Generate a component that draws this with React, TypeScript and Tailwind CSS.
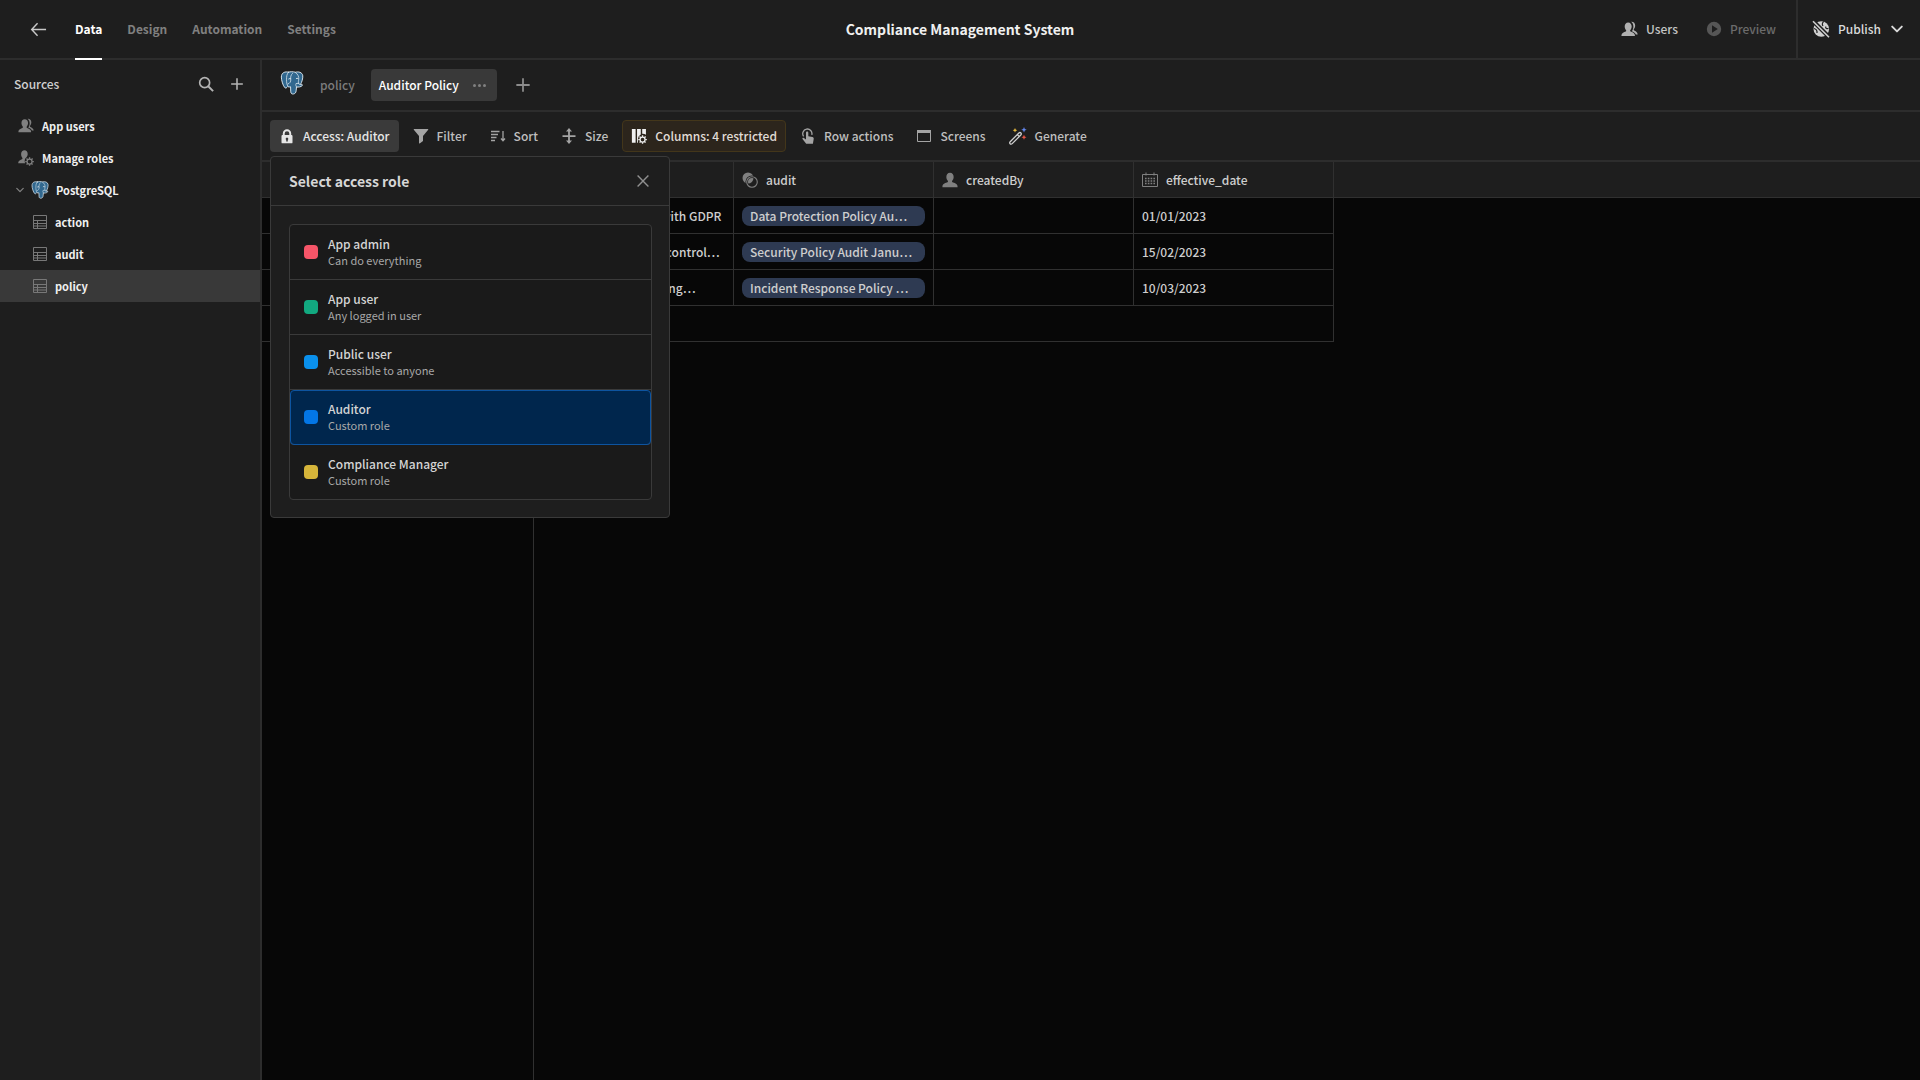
import { ReactNode, useState } from "react";
import clsx from "clsx";

interface IconProps {
  className?: string;
}

interface Role {
  name: string;
  description: string;
  color: string;
}

interface PolicyRow {
  description: string;
  audit: string;
  effectiveDate: string;
}

const roles: Role[] = [
  { name: "App admin", description: "Can do everything", color: "bg-[#f65568]" },
  { name: "App user", description: "Any logged in user", color: "bg-[#12a980]" },
  { name: "Public user", description: "Accessible to anyone", color: "bg-[#0a90ec]" },
  { name: "Auditor", description: "Custom role", color: "bg-[#0376e6]" },
  { name: "Compliance Manager", description: "Custom role", color: "bg-[#d6b53a]" },
];

const rows: PolicyRow[] = [
  {
    description: "Ensured compliance with GDPR",
    audit: "Data Protection Policy Au…",
    effectiveDate: "01/01/2023",
  },
  {
    description: "Defines all the access control…",
    audit: "Security Policy Audit Janu…",
    effectiveDate: "15/02/2023",
  },
  {
    description: "Procedures for reporting…",
    audit: "Incident Response Policy …",
    effectiveDate: "10/03/2023",
  },
];

const tables = ["action", "audit", "policy"];

const ArrowLeft = ({ className }: IconProps) => (
  <svg className={className} viewBox="0 0 18 18" fill="none" stroke="currentColor" strokeWidth="1.5">
    <path d="M17 9H2M8 2.5 1.8 9 8 15.5" />
  </svg>
);

const UsersIcon = ({ className }: IconProps) => (
  <svg className={className} viewBox="0 0 18 18" fill="currentColor">
    <path d="M7.6 1.5c2.3 0 3.7 1.8 3.7 4.2 0 1.6-.7 3-1.4 3.9-.3.4-.3 1.3.3 1.6 1.700.8 4.300 1.500 4.500 3.700v1.100H.5v-1.100c.2-2.200 2.800-2.900 4.500-3.700.6-.3.6-1.200.3-1.600-.7-.9-1.400-2.300-1.400-3.900 0-2.400 1.400-4.200 3.700-4.200z" />
    <path d="M10.800.8c2.300-.3 4.200 1.300 4.200 3.900 0 1.800-.7 3-1.400 3.900-.3.5-.1 1.200.4 1.500 1.300.7 3.300 1.500 3.600 3.700v.4h-1.900c-.7-2-2.700-2.600-4.200-3.400 1-1.300 1.600-3 1.600-4.900 0-2-.7-3.900-2.300-5.100z" />
  </svg>
);

const UserIcon = ({ className }: IconProps) => (
  <svg className={className} viewBox="0 0 18 18" fill="currentColor">
    <path d="M9 .8c2.600 0 4.100 2 4.100 4.700 0 1.800-.8 3.400-1.600 4.300-.4.5-.3 1.500.3 1.800 1.900.8 5.400 1.500 5.700 4.300v1.300H.5v-1.300c.3-2.800 3.800-3.500 5.700-4.300.6-.3.7-1.300.3-1.800-.8-.9-1.600-2.500-1.600-4.300C4.900 2.800 6.400.8 9 .8z" />
  </svg>
);

const GearIcon = () => (
  <>
    <circle cx="13" cy="13" r="2.800" fill="none" stroke="currentColor" strokeWidth="1.400" />
    <path
      d="M13 8.200v1.800M13 16v1.800M8.200 13H10M16 13h1.800M9.600 9.600l1.300 1.300M15.100 15.100l1.300 1.300M9.600 16.400l1.300-1.300M15.100 10.900l1.300-1.300"
      stroke="currentColor"
      strokeWidth="1.500"
    />
  </>
);

const UserGearIcon = ({ className }: IconProps) => (
  <svg className={className} viewBox="0 0 18 18" fill="currentColor">
    <path d="M7.300.3c2.200 0 3.600 1.700 3.600 4.200 0 1.500-.6 2.700-1.300 3.600l-1.200 1.300c-.9 1.600-1.200 3.500-.4 5.600H.3v-1c.2-2.300 2.500-2.900 4.200-3.700.6-.3.7-1.200.3-1.600-.7-.9-1.300-2.400-1.300-4.200C3.500 2 5.100.3 7.300.3z" />
    <GearIcon />
  </svg>
);

const SearchIcon = ({ className }: IconProps) => (
  <svg className={className} viewBox="0 0 18 18" fill="none" stroke="currentColor" strokeWidth="1.900">
    <circle cx="7.500" cy="7.500" r="5.600" />
    <path d="m11.500 11.500 5.500 5.500" strokeWidth="2.200" />
  </svg>
);

const PlusIcon = ({ className }: IconProps) => (
  <svg className={className} viewBox="0 0 18 18" stroke="currentColor" strokeWidth="2">
    <path d="M9 1.500v15M1.500 9h15" />
  </svg>
);

const CrossIcon = ({ className }: IconProps) => (
  <svg className={className} viewBox="0 0 12 12" stroke="currentColor" strokeWidth="1.400">
    <path d="m.6.6 10.800 10.800M11.400.6.6 11.400" />
  </svg>
);

const ChevronDown = ({ className }: IconProps) => (
  <svg
    className={className}
    viewBox="0 0 10 10"
    fill="none"
    stroke="currentColor"
    strokeWidth="1.600"
    strokeLinecap="round"
    strokeLinejoin="round"
  >
    <path d="m1 3 4 4 4-4" />
  </svg>
);

const TableIcon = ({ className }: IconProps) => (
  <svg className={className} viewBox="0 0 14 14" fill="none" stroke="currentColor">
    <path d="M.5.5h13v13H.5zM.5 5.500h13M.5 8.500h13M.5 11h13M4.500 5.500v8" />
  </svg>
);

const PostgresLogo = ({ className }: IconProps) => (
  <svg className={className} viewBox="0 0 24 25" strokeLinecap="round" strokeLinejoin="round">
    <path
      d="M8.200 1.200C5 .3 1 1.400.9 6.300c0 3.200 1.800 9.300 3.700 11.100 1 .9 2-.1 3-1.300.8.700 1.900.6 2.900.3l.2 5.300c.2 1.900 1.300 2.500 2.900 2.200 1.900-.4 2.500-1.500 2.700-3.300l.4-4c1.600.2 4.600.3 6-1.500.7-1-.5-1.100-1.900-1 1.500-2.600 2.700-6.500 2.400-9.100C22.800 1.200 18.500.4 15.500 1.300c-2.300-.7-5-.7-7.300-.1z"
      fill="#31688f"
      stroke="#dce8ef"
      strokeWidth="1"
    />
    <path
      d="M8.200 1.400C6.500 3.500 6.300 6 6.300 8.500c0 3 .1 5.700 1.500 7.500M15.500 1.500c2.700 1.700 3.900 4.500 3.500 7.300-.2 1.500-.7 3 0 4.600l1.300.7M12.500 2.500C10.600 4 10.400 6.500 10.700 9c.2 2-.8 3.800-2.900 4.500M17 16.800c-1-1-1.300-2.300-.8-3.700l2.800-.3"
      fill="none"
      stroke="#dce8ef"
      strokeWidth=".8"
    />
    <path d="M8.700 8.200c.6-.4 1.300-.4 1.800 0M16.500 7.900c.5-.4 1.200-.4 1.700 0" fill="none" stroke="#fff" />
  </svg>
);

const LockIcon = ({ className }: IconProps) => (
  <svg className={className} viewBox="0 0 16 16" fill="currentColor">
    <path
      fillRule="evenodd"
      d="M3.800 7V5.500a4.200 4.200 0 0 1 8.400 0V7h.4c.5 0 .9.4.9.9v6.500c0 .5-.4.900-.9.900H3.400c-.5 0-.9-.4-.9-.9V7.900c0-.5.4-.9.9-.9zm1.900 0h4.600V5.500a2.300 2.300 0 0 0-4.600 0zm1.500 4.900v1.500h1.600v-1.500a1.300 1.300 0 1 0-1.600 0z"
    />
  </svg>
);

const FilterIcon = ({ className }: IconProps) => (
  <svg className={className} viewBox="0 0 16 16" fill="currentColor">
    <path d="M1.200 1h13.600c.4 0 .6.500.4.800L10 8v4.900l-3.300 2.600c-.3.200-.7 0-.7-.4V8L.8 1.800C.6 1.500.8 1 1.200 1z" />
  </svg>
);

const SortIcon = ({ className }: IconProps) => (
  <svg className={className} viewBox="0 0 16 16" fill="none" stroke="currentColor" strokeWidth="1.500">
    <path d="M1 3.500h8.500M1 6.500h7M1 9.500h5.500M1 12.500h4" />
    <path d="M13 3v9.500M11 10.500l2 2.200 2-2.200" strokeWidth="1.300" />
  </svg>
);

const SizeIcon = ({ className }: IconProps) => (
  <svg className={className} viewBox="0 0 16 16" fill="currentColor">
    <path d="M1.500 7.200h13v1.700h-13zM8 0l3 3.500H8.900v3.700H7.100V3.500H5zM8 16l3-3.500H8.900V8.900H7.100v3.600H5z" />
  </svg>
);

const ColumnsIcon = ({ className }: IconProps) => (
  <svg className={className} viewBox="0 0 18 18" fill="currentColor">
    <path d="M1 1h4.200v15.500H1zM6.800 1H11v6.300a6 6 0 0 0-3.200 5v4.200h-1zM12.600 1h4.200v6.700a6 6 0 0 0-4.200-1.200z" />
    <GearIcon />
  </svg>
);

const TapIcon = ({ className }: IconProps) => (
  <svg className={className} viewBox="0 0 16 16" fill="currentColor">
    <path
      d="M3.600 8.300a4.600 4.600 0 1 1 8.200-1.500"
      fill="none"
      stroke="currentColor"
      strokeWidth="1.300"
    />
    <path d="M6 4.700c0-1.600 2.300-1.600 2.300 0v3.600l4.100.8c1 .2 1.500.9 1.300 1.900l-.8 4.700H6.200L2.500 11c-.5-.8.5-1.700 1.400-1L6 11.500z" />
  </svg>
);

const ScreenIcon = ({ className }: IconProps) => (
  <svg className={className} viewBox="0 0 16 16">
    <path d="M1.500 2.500h13v11h-13z" fill="none" stroke="currentColor" />
    <path d="M1 2h14v3H1z" fill="currentColor" />
  </svg>
);

const WandIcon = ({ className }: IconProps) => (
  <svg className={className} viewBox="0 0 18 18">
    <path
      d="m1.200 14.700 8.700-8.700c.7-.7 1.400-.7 2 0s.6 1.400-.1 2l-8.600 8.600c-.7.700-1.500.7-2.100.1s-.6-1.300.1-2zM8.300 7.600l2 2"
      fill="none"
      stroke="#d0d0d0"
      strokeWidth="1.300"
    />
    <path d="m6 1 .7 1.600 1.600.7-1.600.7L6 5.600 5.300 4l-1.600-.7 1.600-.7z" fill="#e6b93f" />
    <path d="m15 0 .8 1.900 1.900.8-1.900.8L15 5.400l-.8-1.900-1.900-.8 1.900-.8z" fill="#6487ee" />
    <path d="m15 7.800.8 1.700 1.700.8-1.700.8-.8 1.700-.8-1.700-1.700-.8 1.700-.8z" fill="#e35445" />
  </svg>
);

const RelationshipIcon = ({ className }: IconProps) => (
  <svg className={className} viewBox="0 0 16 16">
    <circle cx="6" cy="6" r="5.500" fill="currentColor" />
    <circle cx="10" cy="10" r="5.300" fill="none" stroke="#1e1e1e" strokeWidth="2.600" />
    <circle cx="10" cy="10" r="5.300" fill="none" stroke="currentColor" strokeWidth="1.100" />
  </svg>
);

const CalendarIcon = ({ className }: IconProps) => (
  <svg className={className} viewBox="0 0 16 16" fill="none" stroke="currentColor">
    <path d="M.5 2.500h15v12H.5zM4 .5v3M12 .5v3" />
    <path d="M3 6.500h10M3 9h10M3 11.500h10" strokeWidth="1.500" strokeDasharray="1.600 1.200" />
  </svg>
);

const PlayIcon = ({ className }: IconProps) => (
  <svg className={className} viewBox="0 0 16 16" fill="currentColor">
    <path fillRule="evenodd" d="M8 .8a7.200 7.200 0 1 0 0 14.400A7.200 7.200 0 0 0 8 .8zM6 4.300 11.800 8 6 11.700z" />
  </svg>
);

const GlobeStrikeIcon = ({ className }: IconProps) => (
  <svg className={className} viewBox="0 0 18 18">
    <circle cx="9.300" cy="9" r="7.800" fill="currentColor" />
    <path
      d="M11.800 1.500c-1.800 1.300-1.800 3.200-.8 4.500M2 8.500c2 .5 3.300 2 3 4.500M14 6.500c-1 1.500.5 2.500 2.500 2"
      fill="none"
      stroke="#1e1e1e"
      strokeWidth="1.200"
    />
    <path d="m.5.500 17.500 17.500" stroke="#1e1e1e" strokeWidth="4.200" />
    <path d="M1 1.200 17 17.200" stroke="currentColor" strokeWidth="1.600" />
  </svg>
);

interface ToolButtonProps {
  icon: ReactNode;
  label: string;
  variant?: "quiet" | "active" | "warning";
  onClick?: () => void;
}

function ToolButton({ icon, label, variant = "quiet", onClick }: ToolButtonProps) {
  return (
    <button
      type="button"
      onClick={onClick}
      className={clsx(
        "flex h-8 items-center gap-2 whitespace-nowrap rounded border px-2",
        variant === "quiet" && "border-transparent text-[#bebebe]",
        variant === "active" && "border-transparent bg-[#3a3a3a] text-[#e6e6e6]",
        variant === "warning" && "border-[#43361a] bg-[#2c251c] text-[#e0dcd6]"
      )}
    >
      {icon}
      {label}
    </button>
  );
}

function TopBar() {
  return (
    <header className="grid h-[60px] shrink-0 grid-cols-[1fr_auto_1fr] border-b-2 border-[#2d2d2d]">
      <div className="flex items-center">
        <button type="button" aria-label="Back" className="ml-[30px] mr-7">
          <ArrowLeft className="size-[17px] text-[#c8c8c8]" />
        </button>
        <nav className="-mb-[2px] flex gap-[25px] self-stretch font-bold text-[#808080]">
          <a href="#data" className="flex items-center border-b-2 border-white text-white">
            Data
          </a>
          <a href="#design" className="flex items-center border-b-2 border-transparent">
            Design
          </a>
          <a href="#automation" className="flex items-center border-b-2 border-transparent">
            Automation
          </a>
          <a href="#settings" className="flex items-center border-b-2 border-transparent">
            Settings
          </a>
        </nav>
      </div>
      <h1 className="flex items-center text-sm font-bold text-[#f0f0f0]">Compliance Management System</h1>
      <div className="flex items-center justify-end">
        <button type="button" className="flex items-center gap-2 text-[#c4c4c4]">
          <UsersIcon className="size-[17px] text-[#b0b0b0]" />
          Users
        </button>
        <button type="button" disabled className="ml-7 mr-5 flex items-center gap-2 text-[#6b6b6b]">
          <PlayIcon className="size-4 text-[#565656]" />
          Preview
        </button>
        <button
          type="button"
          className="flex items-center gap-2 self-stretch border-l-2 border-[#2d2d2d] pl-[14px] pr-[17px] text-[#dadada]"
        >
          <GlobeStrikeIcon className="size-[18px] text-[#d0d0d0]" />
          Publish
          <ChevronDown className="ml-0.5 size-3" />
        </button>
      </div>
    </header>
  );
}

function Sidebar() {
  return (
    <aside className="flex w-[262px] shrink-0 flex-col border-r-2 border-[#2d2d2d]">
      <div className="flex h-[50px] items-center pb-[2px] pl-[14px] pr-4 text-[#cfcfcf]">
        <h2 className="flex-1 font-medium">Sources</h2>
        <button type="button" aria-label="Search sources" className="mr-4">
          <SearchIcon className="size-4 text-[#b4b4b4]" />
        </button>
        <button type="button" aria-label="Add source">
          <PlusIcon className="size-[14px] text-[#b4b4b4]" />
        </button>
      </div>
      <nav className="flex flex-col text-[11px] font-bold text-[#f0f0f0]">
        <a href="#users" className="flex h-8 items-center gap-2 pl-[18px]">
          <UsersIcon className="size-4 text-[#808080]" />
          App users
        </a>
        <a href="#roles" className="flex h-8 items-center gap-2 pl-[18px]">
          <UserGearIcon className="size-4 text-[#808080]" />
          Manage roles
        </a>
        <a href="#postgres" className="flex h-8 items-center gap-[7px] pl-4">
          <ChevronDown className="size-2 text-[#808080]" />
          <PostgresLogo className="size-[18px]" />
          PostgreSQL
        </a>
        {tables.map((table) => (
          <a
            key={table}
            href={`#${table}`}
            className={clsx("flex h-8 items-center gap-2 pl-[33px]", table === "policy" && "bg-[#393939]")}
          >
            <TableIcon className="size-[14px] text-[#787878]" />
            {table}
          </a>
        ))}
      </nav>
    </aside>
  );
}

function ViewTabs() {
  return (
    <div className="flex h-[52px] items-center border-b-2 border-[#2d2d2d] pl-[18px]">
      <PostgresLogo className="mb-1 size-6" />
      <a href="#policy" className="px-4 text-[#7c7c7c]">
        policy
      </a>
      <div className="flex h-8 items-center gap-[14px] rounded bg-[#393939] pl-2 pr-[11px] text-white">
        <a href="#auditor-policy">Auditor Policy</a>
        <button type="button" aria-label="View options" className="flex gap-[2px]">
          <span className="size-[3px] rounded-full bg-[#808080]" />
          <span className="size-[3px] rounded-full bg-[#808080]" />
          <span className="size-[3px] rounded-full bg-[#808080]" />
        </button>
      </div>
      <button type="button" aria-label="Add view" className="ml-[18px]">
        <PlusIcon className="size-4 text-[#8c8c8c]" />
      </button>
    </div>
  );
}

interface AccessPopoverProps {
  selected: string;
  onSelect: (name: string) => void;
  onClose: () => void;
}

function AccessPopover({ selected, onSelect, onClose }: AccessPopoverProps) {
  return (
    <div
      role="dialog"
      aria-label="Select access role"
      className="absolute left-0 top-full z-10 mt-1 w-[400px] rounded border border-[#3a3a3a] bg-[#1e1e1e]"
    >
      <div className="flex h-[49px] items-center justify-between border-b border-[#3a3a3a] pl-[18px] pr-5">
        <h2 className="text-sm font-bold text-[#d6d6d6]">Select access role</h2>
        <button type="button" aria-label="Close" onClick={onClose}>
          <CrossIcon className="size-3 text-[#909090]" />
        </button>
      </div>
      <div className="pb-[17px] pl-[18px] pr-[17px] pt-[18px]">
        <div className="divide-y divide-[#3a3a3a] rounded border border-[#3a3a3a] bg-[#1a1a1a]">
          {roles.map((role) => (
            <button
              key={role.name}
              type="button"
              onClick={() => onSelect(role.name)}
              className={clsx(
                "flex h-[55px] w-full items-center gap-[10px] px-[14px] text-left last:h-[54px]",
                role.name === selected && "rounded bg-[#00264d] outline -outline-offset-1 outline-[#0d54a0]"
              )}
            >
              <span className={clsx("size-[14px] rounded", role.color)} />
              <span className="flex flex-col">
                <span className="leading-4 text-[#d4d4d4]">{role.name}</span>
                <span className="text-[11px] font-normal leading-4 text-[#a8a8a8]">{role.description}</span>
              </span>
            </button>
          ))}
        </div>
      </div>
    </div>
  );
}

function Toolbar() {
  const [open, setOpen] = useState(true);
  const [role, setRole] = useState("Auditor");

  return (
    <div className="flex h-[50px] items-center gap-[5px] border-b-2 border-[#2d2d2d] px-2">
      <div className="relative">
        <ToolButton
          icon={<LockIcon className="size-4" />}
          label={`Access: ${role}`}
          variant="active"
          onClick={() => setOpen(!open)}
        />
        {open && <AccessPopover selected={role} onSelect={setRole} onClose={() => setOpen(false)} />}
      </div>
      <ToolButton icon={<FilterIcon className="size-4 text-[#a4a4a4]" />} label="Filter" />
      <ToolButton icon={<SortIcon className="size-4 text-[#a4a4a4]" />} label="Sort" />
      <ToolButton icon={<SizeIcon className="size-4 text-[#a4a4a4]" />} label="Size" />
      <ToolButton icon={<ColumnsIcon className="size-4 text-[#f0f0f0]" />} label="Columns: 4 restricted" variant="warning" />
      <ToolButton icon={<TapIcon className="size-4 text-[#a4a4a4]" />} label="Row actions" />
      <ToolButton icon={<ScreenIcon className="size-4 text-[#a4a4a4]" />} label="Screens" />
      <ToolButton icon={<WandIcon className="size-[18px]" />} label="Generate" />
    </div>
  );
}

function PolicyGrid() {
  const headCell = "h-9 border-b border-r border-[#303030] bg-[#1e1e1e] px-2 text-left font-medium";
  const cell = "h-9 truncate border-b border-r border-[#303030] px-2";

  return (
    <div className="flex flex-1 flex-col bg-[#070707] text-[#cecece]">
      <table className="w-full table-fixed border-separate border-spacing-0">
        <colgroup>
          <col className="w-[272px]" />
          <col className="w-[200px]" />
          <col className="w-[200px]" />
          <col className="w-[200px]" />
          <col className="w-[200px]" />
          <col />
        </colgroup>
        <thead>
          <tr>
            <th className={headCell} />
            <th className={headCell} />
            <th className={headCell}>
              <span className="flex items-center gap-2">
                <RelationshipIcon className="size-4 text-[#808080]" />
                audit
              </span>
            </th>
            <th className={headCell}>
              <span className="flex items-center gap-2">
                <UserIcon className="size-4 text-[#808080]" />
                createdBy
              </span>
            </th>
            <th className={headCell}>
              <span className="flex items-center gap-2">
                <CalendarIcon className="size-4 text-[#808080]" />
                effective_date
              </span>
            </th>
            <td className="border-b border-[#303030] bg-[#1e1e1e]" />
          </tr>
        </thead>
        <tbody>
          {rows.map((row) => (
            <tr key={row.audit}>
              <td className={cell} />
              <td className={cell}>{row.description}</td>
              <td className={cell}>
                <span className="block truncate rounded-lg bg-[#2e3a52] px-2 leading-5">{row.audit}</span>
              </td>
              <td className={cell} />
              <td className={cell}>{row.effectiveDate}</td>
              <td />
            </tr>
          ))}
          <tr>
            <td className={cell} />
            <td colSpan={4} className={cell} />
            <td />
          </tr>
        </tbody>
      </table>
      <div className="w-[272px] flex-1 border-r border-[#303030]" />
    </div>
  );
}

export default function App() {
  return (
    <div className="flex min-h-screen flex-col bg-[#1e1e1e] font-['Noto_Sans_CJK_SC',sans-serif] text-xs font-medium leading-5">
      <TopBar />
      <div className="flex flex-1">
        <Sidebar />
        <main className="flex min-w-0 flex-1 flex-col">
          <ViewTabs />
          <Toolbar />
          <PolicyGrid />
        </main>
      </div>
    </div>
  );
}
